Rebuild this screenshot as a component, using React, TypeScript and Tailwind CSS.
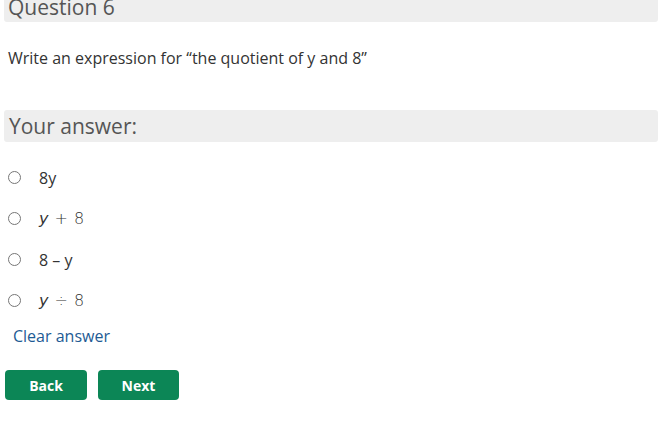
import React from "react";

const options: { key: string; label: React.ReactNode; math?: boolean }[] = [
  { key: "a", label: "8y" },
  {
    key: "b",
    math: true,
    label: (
      <>
        <i>y</i>
        <span className="px-[6px]">+</span>8
      </>
    ),
  },
  { key: "c", label: "8 – y" },
  {
    key: "d",
    math: true,
    label: (
      <>
        <i>y</i>
        <span className="px-[6px]">÷</span>8
      </>
    ),
  },
];

export default function App() {
  return (
    <div className="h-[423px] w-[658px] overflow-hidden bg-white font-['Open_Sans',sans-serif] text-[#333]">
      <div className="-mt-[10px] ml-[4px] flex h-[32px] items-end rounded-[3px] bg-[#eeeeee] pb-[1px] pl-[4px]">
        <h2 className="text-[21px] leading-[28px] text-[#555]">Question 6</h2>
      </div>

      <p className="mt-[25px] ml-[8px] text-[16px] leading-[22px]">
        Write an expression for “the quotient of y and 8”
      </p>

      <div className="mt-[41px] ml-[4px] flex h-[32px] items-center rounded-[3px] bg-[#eeeeee] pl-[5px]">
        <h3 className="text-[21px] leading-[28px] text-[#555]">Your answer:</h3>
      </div>

      <div className="mt-[24px] flex flex-col gap-[18px]">
        {options.map((o) => (
          <label key={o.key} className="flex h-[23px] items-center">
            <input type="radio" name="answer" className="ml-[8px] h-[13px] w-[13px]" />
            <span
              className={
                o.math
                  ? "ml-[18px] font-['DejaVu_Sans',sans-serif] text-[16px] font-light text-[#333]"
                  : "ml-[18px] text-[16px] text-[#333]"
              }
            >
              {o.label}
            </span>
          </label>
        ))}
      </div>

      <a className="mt-[13px] ml-[13px] block text-[16px] leading-[22px] text-[#1d5b94]">Clear answer</a>

      <div className="mt-[23px] ml-[5px] flex gap-[11px]">
        <button className="h-[30px] w-[82px] rounded-[4px] bg-[#0c8656] text-[14px] font-bold text-white">
          Back
        </button>
        <button className="h-[30px] w-[81px] rounded-[4px] bg-[#0c8656] text-[14px] font-bold text-white">
          Next
        </button>
      </div>
    </div>
  );
}
